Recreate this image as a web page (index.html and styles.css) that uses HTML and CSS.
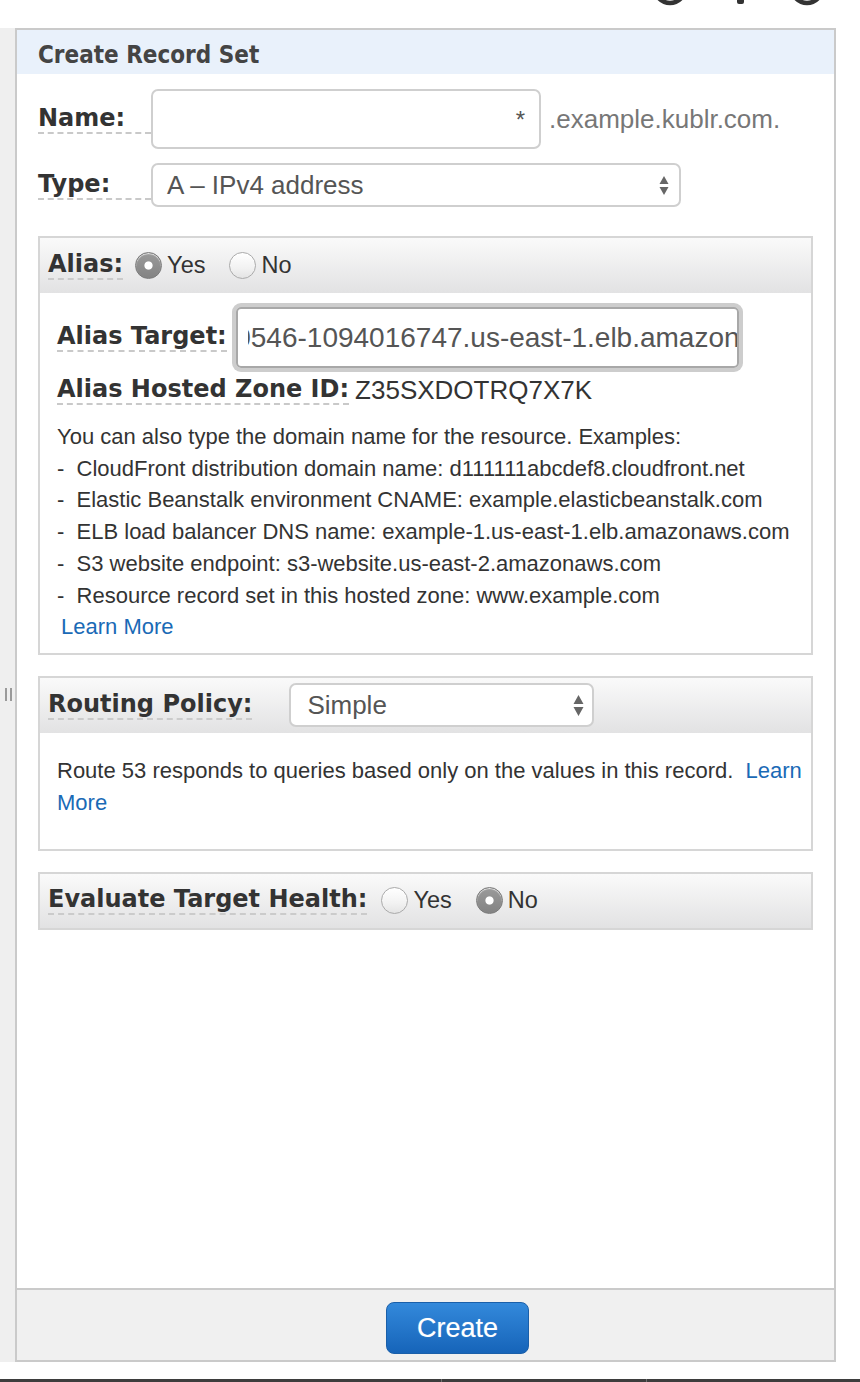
FILE: index.html
```html
<!DOCTYPE html>
<html lang="en">
<head>
<meta charset="utf-8">
<title>Create Record Set</title>
<link rel="stylesheet" href="styles.css">
</head>
<body>
<div class="topbar">
  <svg width="860" height="28" viewBox="0 0 860 28" aria-hidden="true">
    <circle cx="670" cy="-12" r="15" fill="none" stroke="#333" stroke-width="4.5"/>
    <rect x="737" y="-4" width="7" height="8" rx="2" fill="#333"/>
    <circle cx="807" cy="-12" r="15" fill="none" stroke="#333" stroke-width="4.5"/>
  </svg>
</div>
<div class="layout">
  <div class="gutter"><span class="handle"></span></div>
  <section class="panel">
    <h2 class="panel-title">Create Record Set</h2>
    <div class="panel-body">
      <div class="field-row name-row">
        <span class="lbl">Name:</span>
        <div class="text-input name-input"><span class="star">*</span></div>
        <span class="suffix">.example.kublr.com.</span>
      </div>
      <div class="field-row type-row">
        <span class="lbl">Type:</span>
        <div class="select type-select">
          <span>A – IPv4 address</span>
          <svg class="arrows" width="10" height="21" viewBox="0 0 10 21"><path d="M0.5 9 L5 1 L9.5 9 Z M0.5 12 L9.5 12 L5 20 Z" fill="#666"/></svg>
        </div>
      </div>

      <div class="box alias-box">
        <div class="box-head">
          <span class="lbl">Alias:</span>
          <span class="radio checked first"></span><span class="radio-text">Yes</span>
          <span class="radio gap"></span><span class="radio-text">No</span>
        </div>
        <div class="box-body alias-body">
          <div class="target-row">
            <span class="lbl">Alias Target:</span>
            <div class="target-input"><div class="clip"><span class="scroll">0546-1094016747.us-east-1.elb.amazonaws.com</span></div></div>
          </div>
          <div class="zone-row">
            <span class="lbl">Alias Hosted Zone ID:</span>
            <span class="zone-val">Z35SXDOTRQ7X7K</span>
          </div>
          <div class="help">
            <div>You can also type the domain name for the resource. Examples:</div>
            <div>-&nbsp;&nbsp;CloudFront distribution domain name: d111111abcdef8.cloudfront.net</div>
            <div>-&nbsp;&nbsp;Elastic Beanstalk environment CNAME: example.elasticbeanstalk.com</div>
            <div>-&nbsp;&nbsp;ELB load balancer DNS name: example-1.us-east-1.elb.amazonaws.com</div>
            <div>-&nbsp;&nbsp;S3 website endpoint: s3-website.us-east-2.amazonaws.com</div>
            <div>-&nbsp;&nbsp;Resource record set in this hosted zone: www.example.com</div>
            <div class="more"><a href="#">Learn More</a></div>
          </div>
        </div>
      </div>

      <div class="box routing-box">
        <div class="box-head">
          <span class="lbl">Routing Policy:</span>
          <div class="select routing-select">
            <span>Simple</span>
            <svg class="arrows" width="11" height="23" viewBox="0 0 11 23"><path d="M0.5 10 L5.5 1 L10.5 10 Z M0.5 13 L10.5 13 L5.5 22 Z" fill="#666"/></svg>
          </div>
        </div>
        <div class="box-body routing-body">
          <span>Route 53 responds to queries based only on the values in this record.&nbsp; <a href="#">Learn</a></span><br><a href="#">More</a>
        </div>
      </div>

      <div class="box health-box">
        <div class="box-head">
          <span class="lbl">Evaluate Target Health:</span>
          <span class="radio first"></span><span class="radio-text">Yes</span>
          <span class="radio checked gap"></span><span class="radio-text">No</span>
        </div>
      </div>
    </div>
    <div class="panel-foot">
      <button class="btn-create" type="button">Create</button>
    </div>
  </section>
</div>
<div class="bottombar">
  <span class="seg seg1"></span><span class="seg seg2"></span><span class="seg seg3"></span>
</div>
</body>
</html>
```
FILE: styles.css
```css
* { box-sizing: border-box; }
html, body { margin: 0; padding: 0; background: #fff; }
body {
  width: 860px;
  height: 1382px;
  overflow: hidden;
  font-family: "Liberation Sans", Arial, sans-serif;
  color: #333;
}
.topbar { height: 28px; }
.topbar svg { display: block; }

.layout { display: flex; height: 1334px; }
.gutter {
  width: 15px;
  flex: none;
  background: #efefef;
  padding-top: 660px;
}
.handle {
  display: block;
  width: 7px;
  height: 13px;
  margin-left: 5px;
  border-left: 2px solid #9a9a9a;
  border-right: 2px solid #9a9a9a;
}

.panel {
  width: 821px;
  flex: none;
  border: 2px solid #cacaca;
  display: flex;
  flex-direction: column;
  background: #fff;
}
.panel-title {
  margin: 0;
  height: 44px;
  padding: 7px 0 0 21px;
  background: #e9f1fb;
  font-family: "DejaVu Sans Condensed", "DejaVu Sans", sans-serif;
  font-stretch: condensed;
  font-weight: bold;
  font-size: 24px;
  line-height: 37px;
  color: #444;
}
.panel-body { padding: 15px 21px 0 21px; }

.lbl {
  display: inline-block;
  font-family: "DejaVu Sans", Verdana, sans-serif;
  font-weight: bold;
  font-size: 24px;
  line-height: 26px;
  padding-bottom: 1px;
  border-bottom: 2px dashed #c9c9c9;
  color: #333;
  white-space: nowrap;
}

.field-row {
  display: grid;
  grid-template-columns: 113px auto 1fr;
  align-items: center;
}
.type-row { margin-top: 14px; }

.text-input, .select {
  border: 2px solid #cfcfcf;
  border-radius: 7px;
  background: #fff;
}
.name-input {
  width: 390px;
  height: 60px;
  display: flex;
  align-items: center;
  justify-content: flex-end;
  padding-right: 14px;
}
.star { font-size: 24px; color: #555; padding-top: 2px; }
.suffix {
  padding-left: 8px;
  font-size: 26px;
  color: #777;
}

.select {
  height: 44px;
  display: flex;
  align-items: center;
  justify-content: space-between;
  font-size: 26px;
  color: #555;
}
.arrows { display: block; }
.type-select { width: 530px; padding: 0 10px 0 14px; }

.box {
  border: 2px solid #d6d6d6;
  margin-top: 21px;
}
.alias-box { margin-top: 29px; }
.box-head {
  height: 55px;
  display: flex;
  align-items: center;
  padding-left: 8px;
  background: linear-gradient(#fafafa, #e2e2e3);
}
.box-head .lbl { border-bottom-color: #cbcbcb; }

.radio {
  width: 27px;
  height: 27px;
  border-radius: 50%;
  flex: none;
  margin-left: 14px;
  border: 1px solid #aaa;
  background: linear-gradient(#fff, #f2f2f2 60%, #e4e4e4);
  box-shadow: inset 0 1px 1px rgba(255,255,255,0.8);
}
.alias-box .radio.first { margin-left: 12px; }
.radio.gap { margin-left: 24px; }
.radio.checked {
  border: 1px solid #7a7a7a;
  background:
    radial-gradient(circle at 50% 50%, #fff 0 3.6px, rgba(255,255,255,0) 4.6px),
    linear-gradient(#9a9a9a, #838383);
}
.radio-text {
  padding-left: 5px;
  font-size: 23.5px;
  color: #333;
}

.box-body { padding-left: 17px; }
.alias-body { padding-top: 14px; padding-bottom: 10px; padding-right: 10px; }

.target-row { display: flex; align-items: center; }
.target-input {
  margin-left: 9px;
  width: 503px;
  height: 61px;
  border: 2px solid #a8a8a8;
  border-radius: 5px;
  box-shadow: 0 0 0 4px #cdcdcd;
  display: flex;
  align-items: center;
  padding-left: 10px;
  font-size: 28px;
  color: #555;
}
.clip {
  flex: 1;
  overflow: hidden;
  white-space: nowrap;
}
.scroll { display: inline-block; margin-left: -12.5px; }

.zone-row {
  margin-top: 6px;
  height: 32px;
  display: flex;
  align-items: center;
}
.zone-val { padding-left: 6px; font-size: 26px; color: #333; }

.help {
  margin-top: 15px;
  font-size: 22px;
  line-height: 31.7px;
  color: #333;
  white-space: nowrap;
}
.more { padding-left: 4px; }
a { color: #1a6ab6; text-decoration: none; }

.routing-select {
  margin-left: 37px;
  width: 305px;
  padding: 0 8px 0 16px;
  font-size: 26px;
}
.routing-body {
  padding: 22px 4px 30px 17px;
  font-size: 22px;
  line-height: 32px;
  color: #333;
  white-space: nowrap;
}

.health-box .box-head { height: 54px; }

.panel-foot {
  margin-top: auto;
  height: 72px;
  border-top: 2px solid #cacaca;
  background: #f0f0f0;
  padding: 12px 0 0 369px;
}
.btn-create {
  width: 143px;
  height: 52px;
  border: 1px solid #1a5fa9;
  border-radius: 8px;
  background: linear-gradient(#3389db, #1664b9);
  color: #fff;
  font-family: "Liberation Sans", Arial, sans-serif;
  font-size: 27px;
  padding: 0;
  text-shadow: 0 0 1px rgba(255,255,255,0.4);
}

.bottombar {
  margin-top: 17px;
  height: 3px;
  display: flex;
  background: #3d3d3d;
}
.seg { height: 3px; }
.seg1 { width: 441px; }
.seg2 { width: 205px; border-left: 1px solid #707070; }
.seg3 { flex: 1; border-left: 1px solid #707070; }
```
